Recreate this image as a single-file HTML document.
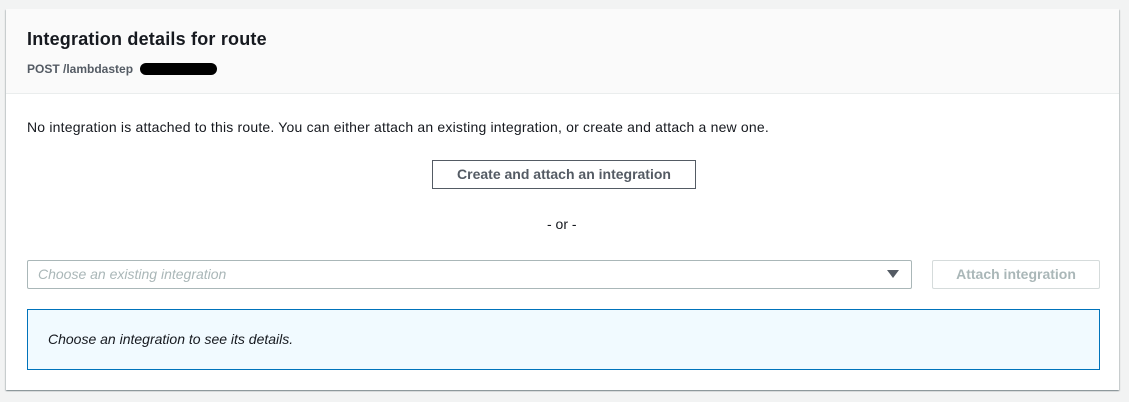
<!DOCTYPE html>
<html><head><style>
body{margin:0;width:1129px;height:402px;background:#f2f3f3;font-family:"Liberation Sans",sans-serif;color:#16191f;position:relative;overflow:hidden}
.card{position:absolute;left:6px;top:9px;width:1113px;height:381px;background:#fff;box-shadow:0 1px 1px rgba(0,28,36,.3),1px 1px 1px rgba(0,28,36,.15),-1px 1px 1px rgba(0,28,36,.15)}
.hdr{position:absolute;left:0;top:0;right:0;height:84px;background:#fafafa;border-bottom:1px solid #eaeded}
.a{position:absolute;white-space:nowrap}
</style></head><body>
<div class="card">
<div class="hdr"></div>
<div class="a" style="left:21px;top:20px;font-size:18px;font-weight:bold;letter-spacing:0.2px">Integration details for route</div>
<div class="a" style="left:21px;top:53px;font-size:12px;font-weight:bold;color:#545b64">POST /lambdastep</div>
<div class="a" style="left:134px;top:54px;width:77px;height:12px;border-radius:6px;background:#000"></div>
<div class="a" style="left:21px;top:110px;font-size:14px;letter-spacing:0.19px">No integration is attached to this route. You can either attach an existing integration, or create and attach a new one.</div>
<div class="a" style="left:426px;top:151px;width:262px;height:27px;border:1px solid #545b64;font-size:14px;font-weight:bold;color:#545b64;text-align:center;line-height:27px">Create and attach an integration</div>
<div class="a" style="left:541px;top:207px;font-size:14px">- or -</div>
<div class="a" style="left:21px;top:251px;width:883px;height:27px;border:1px solid #aab7b8;border-radius:2px"></div>
<div class="a" style="left:32px;top:257px;font-size:14px;font-style:italic;color:#aab7b8">Choose an existing integration</div>
<div class="a" style="left:881px;top:261px;width:0;height:0;border-left:6px solid transparent;border-right:6px solid transparent;border-top:8px solid #545b64"></div>
<div class="a" style="left:926px;top:251px;width:166px;height:27px;border:1px solid #d5dbdb;border-radius:2px;font-size:14px;font-weight:bold;color:#aab7b8;text-align:center;line-height:27px">Attach integration</div>
<div class="a" style="left:21px;top:300px;width:1071px;height:59px;border:1px solid #0073bb;background:#f1faff"></div>
<div class="a" style="left:42px;top:322px;font-size:14px;font-style:italic">Choose an integration to see its details.</div>
</div>
</body></html>
